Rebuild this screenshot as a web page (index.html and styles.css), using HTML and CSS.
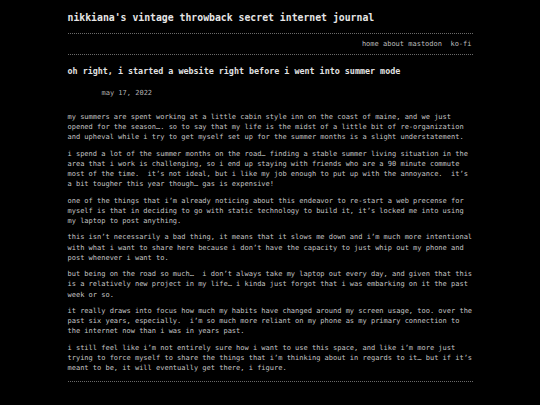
FILE: index.html
```html
<!DOCTYPE html>
<html>
<head>
<meta charset="utf-8">
<link rel="stylesheet" href="styles.css">
</head>
<body>
<div class="wrap">
  <header class="site-header">
    <h1 class="site-title">nikkiana's vintage throwback secret internet journal</h1>
  </header>
  <nav class="site-nav">
    <a href="#">home</a> <a href="#">about</a> <a href="#">mastodon</a>&nbsp; <a href="#">ko-fi</a>
  </nav>
  <article class="post">
    <h2 class="post-title">oh right, i started a website right before i went into summer mode</h2>
    <div class="post-date">may 17, 2022</div>
    <p>my summers are spent working at a little cabin style inn on the coast of maine, and we just opened for the season…. so to say that my life is the midst of a little bit of re-organization and upheval while i try to get myself set up for the summer months is a slight understatement.</p>
    <p>i spend a lot of the summer months on the road… finding a stable summer living situation in the area that i work is challenging, so i end up staying with friends who are a 90 minute commute most of the time.&nbsp; it’s not ideal, but i like my job enough to put up with the annoyance.&nbsp; it’s a bit tougher this year though… gas is expensive!</p>
    <p>one of the things that i’m already noticing about this endeavor to re-start a web precense for myself is that in deciding to go with static technology to build it, it’s locked me into using my laptop to post anything.</p>
    <p>this isn’t necessarily a bad thing, it means that it slows me down and i’m much more intentional with what i want to share here because i don’t have the capacity to just whip out my phone and post whenever i want to.</p>
    <p>but being on the road so much…&nbsp; i don’t always take my laptop out every day, and given that this is a relatively new project in my life… i kinda just forgot that i was embarking on it the past week or so.</p>
    <p>it really draws into focus how much my habits have changed around my screen usage, too. over the past six years, especially.&nbsp; i’m so much more reliant on my phone as my primary connection to the internet now than i was in years past.</p>
    <p>i still feel like i’m not entirely sure how i want to use this space, and like i’m more just trying to force myself to share the things that i’m thinking about in regards to it… but if it’s meant to be, it will eventually get there, i figure.</p>
  </article>
  <footer class="site-footer"></footer>
</div>
</body>
</html>
```
FILE: styles.css
```css
html, body {
  margin: 0;
  padding: 0;
  background: #000;
}
body {
  font-family: "DejaVu Sans Mono", "Liberation Mono", monospace;
  font-size: 7px;
  color: #c4c4c4;
}
.wrap {
  width: 405px;
  margin: 0 auto;
}
.site-header {
  padding-top: 11px;
  padding-bottom: 8px;
  border-bottom: 1px dotted #6a6a6a;
}
.site-title {
  margin: 0;
  font-size: 9.8px;
  line-height: 14px;
  font-weight: bold;
  color: #e6e6e6;
}
.site-nav {
  text-align: right;
  padding: 5px 1px 5px 0;
  line-height: 10px;
  border-bottom: 1px dotted #6a6a6a;
}
.site-nav a {
  color: #bdbdbd;
  text-decoration: none;
}
.post-title {
  margin: 10px 0 0;
  font-size: 8.4px;
  line-height: 12px;
  font-weight: bold;
  color: #e2e2e2;
}
.post-date {
  margin: 10.5px 0 0 34px;
  line-height: 10px;
  color: #b0b0b0;
}
.post p {
  margin: 0;
  line-height: 10.15px;
}
.post-date + p {
  margin-top: 14.5px;
}
.post p + p {
  margin-top: 6.3px;
}
.site-footer {
  margin-top: 8px;
  border-top: 1px dotted #6a6a6a;
}
```
